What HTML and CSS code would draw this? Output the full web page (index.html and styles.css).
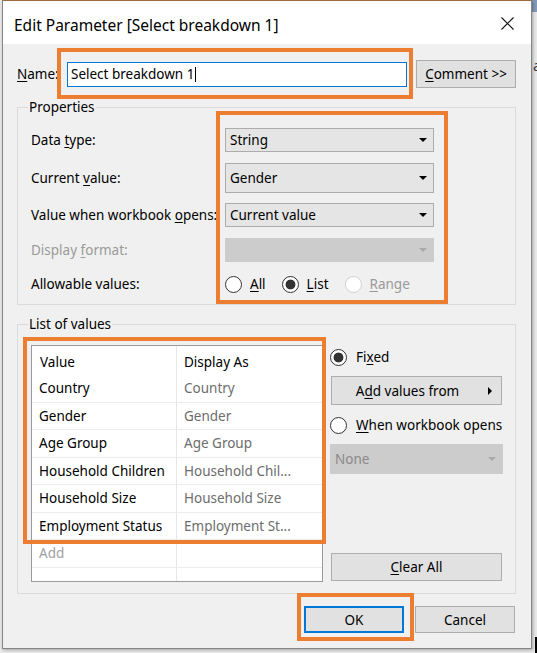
FILE: index.html
```html
<!DOCTYPE html>
<html lang="en">
<head>
<meta charset="utf-8">
<title>Edit Parameter</title>
<link rel="stylesheet" href="styles.css">
</head>
<body>
<div class="screen">
  <span class="bg-glyph">a</span>
  <div class="dialog">
    <div class="titlebar">
      <span class="title">Edit Parameter [Select breakdown 1]</span>
      <svg class="close" viewBox="0 0 13 13" width="13" height="13"><path d="M0.5 0.5L12.5 12.5M12.5 0.5L0.5 12.5" stroke="#111" stroke-width="1.1" fill="none"/></svg>
    </div>
    <div class="content">
      <div class="name-row">
        <span class="name-label"><u>N</u>ame:</span>
        <div class="text-input"><span>Select breakdown 1</span><span class="caret"></span></div>
        <div class="btn comment"><span><u>C</u>omment &gt;&gt;</span></div>
      </div>

      <fieldset class="group props">
        <legend>Properties</legend>
        <div class="props-grid">
          <div class="lbl">Data <u>t</u>ype:</div>
          <div class="combo"><span>String</span><i class="arrow"></i></div>
          <div class="lbl">Current <u>v</u>alue:</div>
          <div class="combo"><span>Gender</span><i class="arrow"></i></div>
          <div class="lbl">Value when workbook <u>o</u>pens:</div>
          <div class="combo"><span>Current value</span><i class="arrow"></i></div>
          <div class="lbl dis">Display <u>f</u>ormat:</div>
          <div class="combo off"><span></span><i class="arrow"></i></div>
          <div class="lbl">Allowable values:</div>
          <div class="radios">
            <div class="ropt"><span class="radio"></span><span><u>A</u>ll</span></div>
            <div class="ropt"><span class="radio on"></span><span><u>L</u>ist</span></div>
            <div class="ropt dis"><span class="radio"></span><span><u>R</u>ange</span></div>
          </div>
        </div>
      </fieldset>

      <fieldset class="group values">
        <legend>List of values</legend>
        <div class="values-body">
          <div class="table">
            <div class="trow thead"><div>Value</div><div>Display As</div></div>
            <div class="trow"><div>Country</div><div class="alias">Country</div></div>
            <div class="trow"><div>Gender</div><div class="alias">Gender</div></div>
            <div class="trow"><div>Age Group</div><div class="alias">Age Group</div></div>
            <div class="trow"><div>Household Children</div><div class="alias">Household Chil...</div></div>
            <div class="trow"><div>Household Size</div><div class="alias">Household Size</div></div>
            <div class="trow"><div>Employment Status</div><div class="alias">Employment St...</div></div>
            <div class="trow"><div class="addcell">Add</div><div></div></div>
            <div class="trow filler"><div></div><div></div></div>
          </div>
          <div class="side">
            <div class="ropt fixed"><span class="radio on"></span><span>Fi<u>x</u>ed</span></div>
            <div class="btn addfrom"><span class="btn-text">A<u>d</u>d values from</span><i class="rarrow"></i></div>
            <div class="ropt when"><span class="radio"></span><span><u>W</u>hen workbook opens</span></div>
            <div class="combo off none"><span>None</span><i class="arrow"></i></div>
            <div class="btn clear"><span><u>C</u>lear All</span></div>
          </div>
        </div>
      </fieldset>

      <div class="footer">
        <div class="btn ok">OK</div>
        <div class="btn cancel">Cancel</div>
      </div>
    </div>
  </div>

  <div class="mark m-name"></div>
  <div class="mark m-props"></div>
  <div class="mark m-list"></div>
  <div class="mark m-ok"></div>
  <div class="cursor-bar"></div>
</div>
</body>
</html>
```

FILE: styles.css
```css
* { box-sizing: border-box; }
html, body { margin: 0; padding: 0; }
body {
  font-family: "Noto Sans", "Open Sans", sans-serif;
  font-size: 13.5px;
  color: #000;
  background: #e8e8e8;
}
u { text-decoration-thickness: 1px; text-underline-offset: 2px; }

.screen {
  position: relative;
  width: 537px;
  height: 653px;
  overflow: hidden;
  padding-left: 2px;
  background: linear-gradient(#8399b7, #8399b7) right top / 5px 12px no-repeat, #e8e8e8;
}
.bg-glyph {
  position: absolute;
  left: 533px;
  top: 55px;
  font-size: 15px;
  color: #333;
}

.dialog {
  width: 530px;
  height: 649px;
  background: #f0f0f0;
  border: 1px solid #858585;
  border-top-color: #9b6b3f;
  display: flex;
  flex-direction: column;
  box-shadow: 1px 1px 3px rgba(0, 0, 0, 0.3);
}

.titlebar {
  height: 43px;
  flex: none;
  background: #fff;
  display: flex;
  align-items: center;
  padding: 4px 17px 0 11px;
}
.title { font-size: 15.5px; color: #000; }
.close { margin-left: auto; align-self: flex-start; margin-top: 12px; }

.content {
  flex: 1;
  display: flex;
  flex-direction: column;
  padding: 16px 15px 0 14px;
}

.name-row { display: flex; align-items: center; height: 28px; }
.name-label { width: 50px; }
.text-input {
  width: 340px;
  height: 25px;
  border: 1px solid #0078d7;
  background: #fff;
  padding: 0 3px;
  display: flex;
  align-items: center;
}
.caret { width: 1px; height: 15px; background: #000; margin-left: 1px; }

.btn {
  background: #e1e1e1;
  border: 1px solid #adadad;
  display: flex;
  align-items: center;
  justify-content: center;
  color: #000;
}
.comment { margin-left: auto; width: 100px; height: 28px; }

fieldset.group {
  margin: 10px 0 0;
  padding: 0 0 8px 10px;
  border: 1px solid #dadada;
  min-width: 0;
}
legend { padding: 0 1px; line-height: 18px; }

.props-grid {
  margin: 12px 0 0 3px;
  display: grid;
  grid-template-columns: 194px 209px;
  grid-template-rows: 24px 30px 24px 24px 24px;
  row-gap: 10.5px;
  align-items: center;
}
.lbl.dis { color: #9a9a9a; }

.combo {
  height: 100%;
  background: #e5e5e5;
  border: 1px solid #acacac;
  display: flex;
  align-items: center;
  justify-content: space-between;
  padding: 0 6px 0 4px;
}
.arrow {
  width: 0;
  height: 0;
  border-left: 4px solid transparent;
  border-right: 4px solid transparent;
  border-top: 4px solid #000;
}
.combo.off { background: #cccccc; border-color: #cccccc; color: #8a8a8a; }
.combo.off .arrow { border-top-color: #a9a9a9; }

.radios { display: flex; align-items: center; gap: 16px; }
.ropt { display: flex; align-items: center; gap: 8px; }
.radio {
  width: 17px;
  height: 17px;
  flex: none;
  border-radius: 50%;
  border: 1px solid #333;
  background: #fff;
}
.radio.on { background: radial-gradient(circle, #333 0 4.5px, #fff 5.3px); }
.ropt.dis { color: #9a9a9a; }
.ropt.dis .radio { border-color: #cfcfcf; }

fieldset.values { padding-bottom: 11px; }
.values-body {
  display: flex;
  gap: 7px;
  margin: 12px 0 0 3px;
  height: 237px;
}
.table {
  width: 292px;
  border: 1px solid #9b9b9b;
  background: #fff;
  display: flex;
  flex-direction: column;
  overflow: hidden;
}
.trow {
  display: grid;
  grid-template-columns: 145px 1fr;
  height: 27.5px;
  flex: none;
  border-bottom: 1px solid #ececec;
}
.trow > div { display: flex; align-items: center; padding-left: 7px; white-space: nowrap; }
.trow > div:first-child { border-right: 1px solid #e6e6e6; }
.thead { height: 29px; border-bottom: none; }
.thead > div { padding-top: 3px; }
.thead > div:first-child { padding-left: 8px; }
.alias { color: #6d6d6d; }
.addcell { color: #a0a0a0; }
.trow.filler { flex: 1; border-bottom: none; }

.side { width: 173px; display: flex; flex-direction: column; }
.side .ropt { gap: 9px; height: 18px; }
.side .fixed { margin-top: 3px; }
.addfrom {
  margin: 10px 0 0 1px;
  width: 171px;
  height: 29px;
  padding: 0 9px 0 0;
}
.btn-text { flex: 1; text-align: center; padding-right: 5px; }
.rarrow {
  width: 0;
  height: 0;
  border-top: 4px solid transparent;
  border-bottom: 4px solid transparent;
  border-left: 4px solid #000;
}
.side .when { margin-top: 11px; }
.none { margin-top: 10px; height: 30px; width: 173px; }
.clear { margin: auto 0 1px 1px; width: 171px; height: 28px; }

.footer {
  display: flex;
  justify-content: flex-end;
  gap: 11px;
  margin-top: 12px;
  padding-right: 1px;
}
.ok, .cancel { width: 100px; height: 27px; }
.ok { border: 2px solid #0078d7; }

.mark { position: absolute; border: 4px solid #ed7d31; }
.m-name { left: 57px; top: 48px; width: 356px; height: 51px; }
.m-props { left: 216px; top: 111px; width: 232px; height: 193px; }
.m-list { left: 23px; top: 337px; width: 303px; height: 207px; }
.m-ok { left: 297px; top: 593px; width: 117px; height: 48px; }

.cursor-bar {
  position: absolute;
  left: 535px;
  top: 637px;
  width: 2px;
  height: 16px;
  background: #000;
}
```
